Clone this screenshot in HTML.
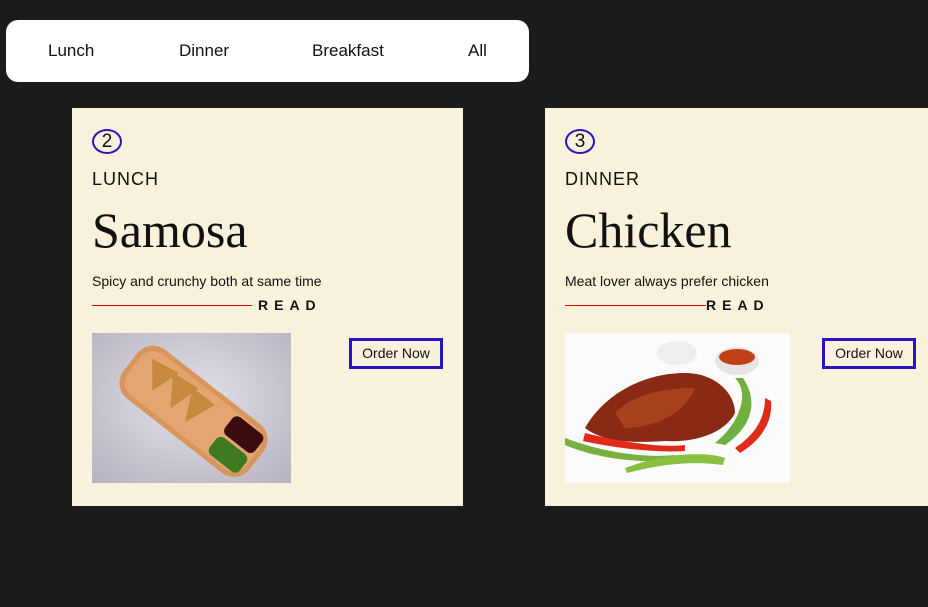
<!DOCTYPE html>
<html><head><meta charset="utf-8"><style>
*{margin:0;padding:0;box-sizing:border-box}
body{width:928px;height:607px;background:#1b1b1b;position:relative;overflow:hidden;font-family:"Liberation Sans",sans-serif;color:#111}
.nav{position:absolute;left:6px;top:20px;width:523px;height:62px;background:#fff;border-radius:12px}
.nav span{position:absolute;top:21px;font-size:17px;color:#111}
.card{position:absolute;top:108px;height:398px;background:#f8f2dc}
.num{position:absolute;left:20px;top:21px;width:30px;height:25px;border:2px solid #2a14c0;border-radius:50%;font-size:19px;text-align:center;line-height:21px}
.cat{position:absolute;left:20px;top:61px;font-size:18px;letter-spacing:1px}
.title{position:absolute;left:20px;top:94px;font-family:"Liberation Serif",serif;font-size:50px;line-height:56px}
.desc{position:absolute;left:20px;top:165px;font-size:14px}
.line{position:absolute;left:20px;top:197px;height:1px;background:#d00}
.read{position:absolute;top:189px;font-size:14px;font-weight:bold;letter-spacing:6px}
.img{position:absolute;left:20px;top:225px;height:150px}
.btn{position:absolute;top:230px;width:94px;height:31px;border:3px solid #2a14c0;font-size:14px;text-align:center;line-height:25px}
</style></head><body>
<div class="nav"><span style="left:42px">Lunch</span><span style="left:173px">Dinner</span><span style="left:306px">Breakfast</span><span style="left:462px">All</span></div>

<div class="card" style="left:72px;width:391px">
<div class="num">2</div>
<div class="cat">LUNCH</div>
<div class="title">Samosa</div>
<div class="desc">Spicy and crunchy both at same time</div>
<div class="line" style="width:160px"></div>
<div class="read" style="left:186px">READ</div>
<svg class="img" width="199" height="150" viewBox="0 0 199 150">
<defs><radialGradient id="g1" cx="50%" cy="45%" r="70%"><stop offset="0" stop-color="#e2e2ea"/><stop offset="1" stop-color="#b8b4c2"/></radialGradient></defs>
<rect width="199" height="150" fill="url(#g1)"/>
<g transform="rotate(38 100 72)">
<rect x="25" y="45" width="160" height="62" rx="20" fill="#d9955c"/>
<rect x="30" y="50" width="150" height="52" rx="16" fill="#e4a670"/>
<path d="M40 60 L70 55 L60 85Z M65 58 L95 55 L85 88Z M90 58 L118 58 L105 90Z" fill="#c88840"/>
<rect x="140" y="52" width="38" height="23" rx="6" fill="#3a0c10"/>
<rect x="140" y="78" width="38" height="22" rx="6" fill="#3e7a22"/>
</g>
</svg>
<div class="btn" style="left:277px">Order Now</div>
</div>

<div class="card" style="left:545px;width:390px">
<div class="num">3</div>
<div class="cat">DINNER</div>
<div class="title">Chicken</div>
<div class="desc">Meat lover always prefer chicken</div>
<div class="line" style="width:141px"></div>
<div class="read" style="left:161px">READ</div>
<svg class="img" width="225" height="150" viewBox="0 0 225 150">
<rect width="225" height="150" fill="#fbfbfb"/>
<ellipse cx="112" cy="20" rx="20" ry="12" fill="#eeeef2"/>
<ellipse cx="172" cy="28" rx="22" ry="14" fill="#e8e4e4"/>
<ellipse cx="172" cy="24" rx="18" ry="8" fill="#c0401a"/>
<path d="M20 95 C40 60 80 40 120 40 C150 40 170 60 170 80 C160 100 130 110 100 108 C70 110 40 110 20 95Z" fill="#8a2a14"/>
<path d="M50 80 C70 60 100 55 130 55 C120 80 90 95 60 95Z" fill="#a8401e"/>
<path d="M20 100 C60 110 100 115 120 112 L120 118 C90 120 50 115 18 108Z" fill="#e02a1a"/>
<path d="M0 105 C40 120 80 125 110 122 L110 128 C70 130 30 125 0 112Z" fill="#7ab040"/>
<path d="M60 135 C100 120 140 118 160 125 L158 132 C130 128 100 130 62 140Z" fill="#8ac040"/>
<path d="M170 45 C185 60 175 90 150 110 L160 112 C185 95 195 70 178 45Z" fill="#70b040"/>
<path d="M200 65 C200 90 185 105 170 115 L175 120 C195 108 208 90 206 68Z" fill="#e02a1a"/>
</svg>
<div class="btn" style="left:277px">Order Now</div>
</div>
</body></html>
